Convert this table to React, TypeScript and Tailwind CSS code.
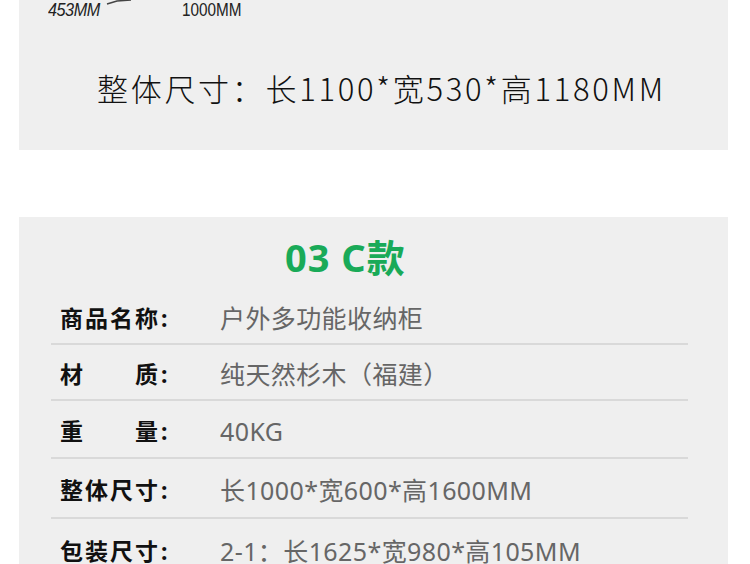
import React from 'react';

const rows: { label: string[]; value: string; h: string }[] = [
  { label: ['商', '品', '名', '称'], value: '户外多功能收纳柜', h: 'h-[56px]' },
  { label: ['材', '质'], value: '纯天然杉木（福建）', h: 'h-[56px]' },
  { label: ['重', '量'], value: '40KG', h: 'h-[58px]' },
  { label: ['整', '体', '尺', '寸'], value: '长1000*宽600*高1600MM', h: 'h-[60px]' },
  { label: ['包', '装', '尺', '寸'], value: '2-1：长1625*宽980*高105MM', h: 'h-[60px]' },
];

const App: React.FC = () => {
  return (
    <div className="w-[750px] h-[564px] overflow-hidden bg-white font-['Noto_Sans','Noto_Sans_CJK_SC',sans-serif]">
      {/* top dimensions panel */}
      <div className="relative ml-[19px] w-[709px] h-[150px] bg-[#efefef]">
        <span className="absolute left-[29px] top-[-3px] text-[18px] italic text-[#222] tracking-[-0.5px] font-['Liberation_Sans',sans-serif] scale-x-90 origin-left">
          453MM
        </span>
        <svg className="absolute left-[86px] top-0" width="30" height="6" viewBox="0 0 30 6">
          <path d="M2 4 L12 1 L26 0" stroke="#444" strokeWidth="1.5" fill="none" />
        </svg>
        <span className="absolute left-[163px] top-[-3px] text-[18px] text-[#222] font-['Liberation_Sans',sans-serif] scale-x-[0.85] origin-left">
          1000MM
        </span>
        <div className="flex h-full items-center pl-[78px] pt-[24px]">
          <span className="text-[31px] font-light leading-none text-[#111] tracking-[2.7px] font-['Noto_Sans_CJK_SC',sans-serif]">
            整体尺寸：长1100*宽530*高1180MM
          </span>
        </div>
      </div>

      {/* 03 C款 */}
      <div className="ml-[19px] mt-[67px] w-[709px] h-[400px] bg-[#efefef] pt-[20px]">
        <div className="h-[40px] flex items-center pl-[266px]">
          <span className="text-[38px] font-bold leading-none text-[#19aa58] tracking-[1px]">03 C款</span>
        </div>
        <div className="ml-[32px] w-[637px] mt-[12px]">
          {rows.map((r, i) => (
            <div
              key={i}
              className={`flex items-center ${r.h} pt-[5px] ${i < rows.length - 1 ? 'border-b-2 border-[#d9d9d9]' : ''}`}
            >
              <div className="ml-[9px] w-[113px] flex items-center">
                <div className="w-[98px] flex justify-between text-[23px] font-bold text-[#111] leading-none">
                  {r.label.map((c, j) => (
                    <span key={j}>{c}</span>
                  ))}
                </div>
                <span className="text-[23px] font-bold text-[#111] leading-none ml-[3px]">:</span>
              </div>
              <span className="ml-[47px] text-[25px] text-[#666] leading-none tracking-[0.4px]">{r.value}</span>
            </div>
          ))}
        </div>
      </div>
    </div>
  );
};

export default App;
